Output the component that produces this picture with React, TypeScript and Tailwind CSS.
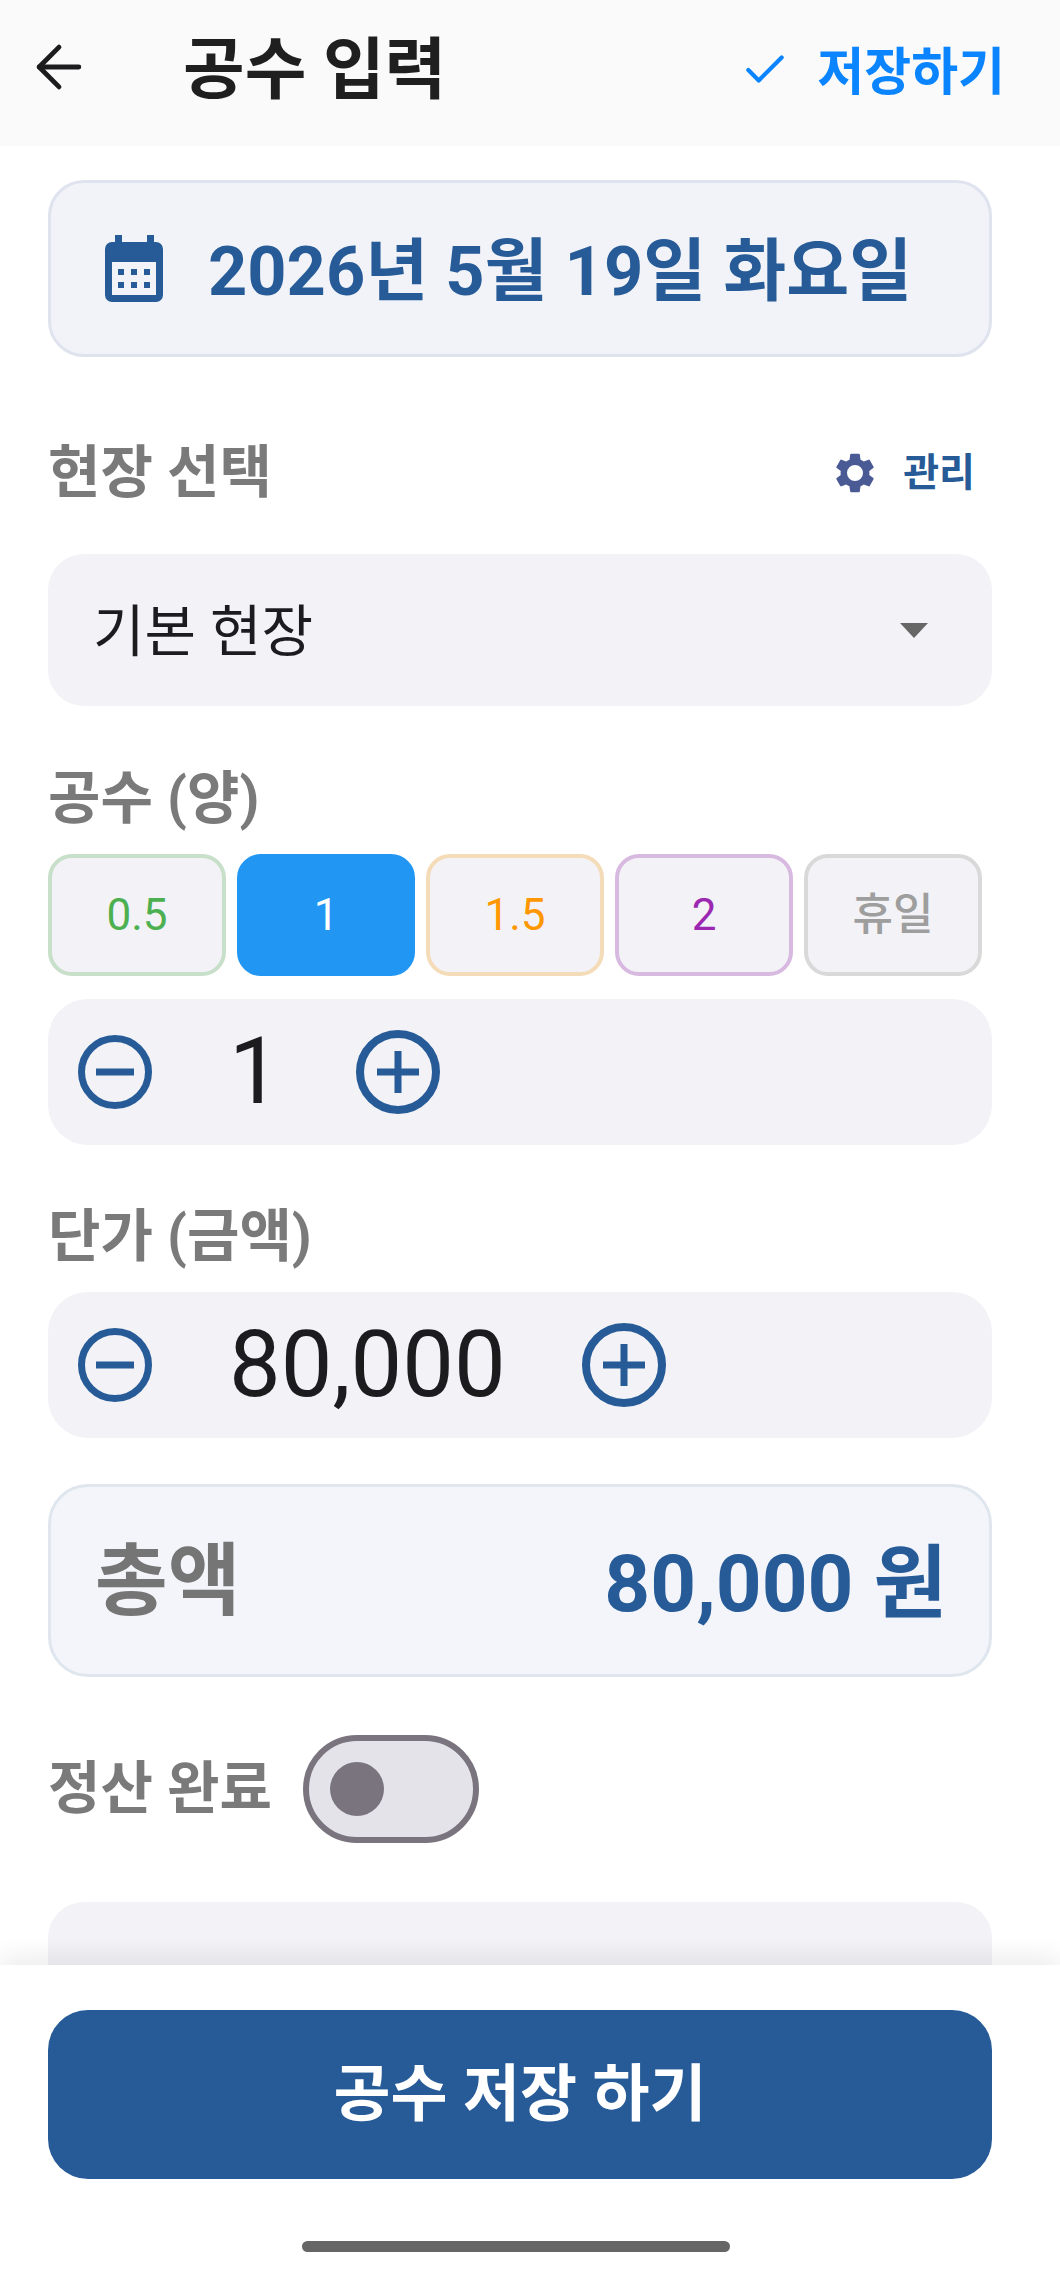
import { ArrowLeft, Check } from 'lucide-react'

const font = { fontFamily: 'Roboto, "Noto Sans CJK KR", sans-serif' }

function CalendarIcon() {
  return (
    <svg viewBox="0 0 58 67" className="h-[67px] w-[58px]" fill="#265b97">
      <rect x="10" y="0" width="7" height="9" />
      <rect x="42" y="0" width="7" height="9" />
      <path d="M7 7h44a7 7 0 0 1 7 7v46a7 7 0 0 1-7 7H7a7 7 0 0 1-7-7V14a7 7 0 0 1 7-7zM7 27v33h44V27z" fillRule="evenodd" />
      {[13, 26, 39].map((x) =>
        [34, 47].map((y) => <rect key={`${x}-${y}`} x={x} y={y} width="6" height="6" />),
      )}
    </svg>
  )
}

function GearIcon() {
  return (
    <svg viewBox="0 0 24 24" className="h-[48px] w-[48px]" fill="#4a5a94">
      <path
        fillRule="evenodd"
        d="M19.14 12.94c.04-.3.06-.61.06-.94 0-.32-.02-.64-.07-.94l2.03-1.58a.49.49 0 0 0 .12-.61l-1.92-3.32a.488.488 0 0 0-.59-.22l-2.39.96c-.5-.38-1.03-.7-1.62-.94l-.36-2.54a.484.484 0 0 0-.48-.41h-3.84c-.24 0-.43.17-.47.41l-.36 2.54c-.59.24-1.13.57-1.62.94l-2.39-.96c-.22-.08-.47 0-.59.22L2.74 8.87c-.12.21-.08.47.12.61l2.03 1.58c-.05.3-.09.63-.09.94s.02.64.07.94l-2.03 1.58a.49.49 0 0 0-.12.61l1.92 3.32c.12.22.37.29.59.22l2.39-.96c.5.38 1.03.7 1.62.94l.36 2.54c.05.24.24.41.48.41h3.84c.24 0 .44-.17.47-.41l.36-2.54c.59-.24 1.13-.56 1.62-.94l2.39.96c.22.08.47 0 .59-.22l1.92-3.32c.12-.22.07-.47-.12-.61l-2.01-1.58zM12 16a4 4 0 1 1 0-8 4 4 0 0 1 0 8z"
      />
    </svg>
  )
}

function MinusCircle() {
  return (
    <svg viewBox="0 0 74 74" className="h-[74px] w-[74px]" fill="none" stroke="#265b97" strokeWidth="7">
      <circle cx="37" cy="37" r="33.5" />
      <path d="M18 37h38" />
    </svg>
  )
}

function PlusCircle() {
  return (
    <svg viewBox="0 0 84 84" className="h-[84px] w-[84px]" fill="none" stroke="#265b97" strokeWidth="8">
      <circle cx="42" cy="42" r="38" />
      <path d="M21 42h42M42 21v42" strokeWidth="7" />
    </svg>
  )
}

function Label({ children }: { children: string }) {
  return <div className="text-[57px] font-bold leading-[66px] text-[#7a7a7a]">{children}</div>
}

function Stepper({ value, gap }: { value: string; gap: string }) {
  return (
    <div className="flex h-[146px] items-center rounded-[40px] bg-[#f2f2f7] pl-[30px]">
      <MinusCircle />
      <div className={`ml-[77px] text-[92px] font-[430] leading-none text-[#1c1c1e] ${gap}`}>{value}</div>
      <PlusCircle />
    </div>
  )
}

export default function App() {
  const chips = [
    { label: '0.5', box: 'border-[#c8dfc9] bg-[#f2f2f7] text-[#4caf50]' },
    { label: '1', box: 'border-[#2196f3] bg-[#2196f3] text-white' },
    { label: '1.5', box: 'border-[#f5dcb8] bg-[#f2f2f7] text-[#ff9800]' },
    { label: '2', box: 'border-[#d8b9e0] bg-[#f2f2f7] text-[#9c27b0]' },
    { label: '휴일', box: 'border-[#d9d9d9] bg-[#f2f2f7] font-medium text-[#9e9e9e]' },
  ]

  return (
    <div style={font} className="flex h-[2269px] flex-col overflow-hidden bg-white">
      <header className="flex h-[146px] shrink-0 items-start bg-[#fafafa]">
        <ArrowLeft className="ml-[25px] mt-[33px] h-[68px] w-[68px] text-[#1c1c1e]" strokeWidth={1.7} />
        <h1 className="ml-[90px] mt-[30px] text-[67px] font-bold leading-[80px] text-[#1f1f1f]">공수 입력</h1>
        <div className="ml-auto mr-[55px] mt-[41px] flex items-center">
          <Check className="mb-[6px] mr-[27px] h-[50px] w-[50px] text-[#0a84ff]" strokeWidth={2} />
          <span className="text-[51px] font-bold leading-[64px] text-[#0a84ff]">저장하기</span>
        </div>
      </header>

      <main className="flex-1 overflow-hidden pl-[48px] pr-[68px] pt-[34px]">
        <div className="flex h-[177px] items-center rounded-[36px] border-[3px] border-[#dfe3ee] bg-[#f2f3f8] pl-[54px]">
          <CalendarIcon />
          <span className="ml-[45px] pt-[8px] text-[68.5px] font-bold leading-none text-[#265b97]">2026년 5월 19일 화요일</span>
        </div>

        <div className="mt-[81px] flex h-[70px] items-center justify-between pr-[17px]">
          <Label>현장 선택</Label>
          <div className="flex items-center">
            <GearIcon />
            <span className="ml-[24px] text-[39px] font-bold leading-none text-[#265b97]">관리</span>
          </div>
        </div>

        <div className="mt-[46px] flex h-[152px] items-center justify-between rounded-[36px] bg-[#f2f2f7] pl-[45px] pr-[64px]">
          <span className="pt-[3px] text-[56px] leading-none text-[#1c1c1e]">기본 현장</span>
          <div className="h-0 w-0 border-x-[14px] border-t-[15px] border-x-transparent border-t-[#666666]" />
        </div>

        <div className="mt-[60px]">
          <Label>공수 (양)</Label>
        </div>

        <div className="mt-[22px] flex gap-[11px]">
          {chips.map((chip) => (
            <div
              key={chip.label}
              className={`flex h-[122px] w-[178px] items-center justify-center rounded-[24px] border-[4px] text-[44px] leading-none ${chip.box}`}
            >
              {chip.label}
            </div>
          ))}
        </div>

        <div className="mt-[23px]">
          <Stepper value="1" gap="mr-[75px]" />
        </div>

        <div className="mt-[59px]">
          <Label>단가 (금액)</Label>
        </div>

        <div className="mt-[22px]">
          <Stepper value="80,000" gap="mr-[76px]" />
        </div>

        <div className="mt-[46px] flex h-[193px] items-center justify-between rounded-[40px] border-[3px] border-[#e0e6ee] bg-[#f3f5fa] pl-[44px] pr-[42px]">
          <span className="pt-[3px] text-[79px] font-bold leading-none text-[#757575]">총액</span>
          <span className="pt-[6px] text-[80px] font-bold leading-none text-[#265b97]">80,000 원</span>
        </div>

        <div className="mt-[58px] flex items-center">
          <Label>정산 완료</Label>
          <div className="ml-[31px] flex h-[108px] w-[176px] items-center rounded-full border-[6px] border-[#79747e] bg-[#e4e3ea] pl-[21px]">
            <div className="h-[54px] w-[54px] rounded-full bg-[#79747e]" />
          </div>
        </div>

        <div className="mt-[59px] h-[160px] rounded-[36px] bg-[#f2f2f7] pl-[46px] pt-[62px] text-[50px] leading-[60px] text-[#9a9a9f]">
          메모를 입력하세요
        </div>
      </main>

      <footer className="relative h-[304px] shrink-0 bg-white pl-[48px] pr-[68px] pt-[45px] shadow-[0_-8px_24px_rgba(0,0,0,0.08)]">
        <div className="flex h-[169px] items-center justify-center rounded-[40px] bg-[#265b97] text-[62px] font-bold leading-none text-white">
          공수 저장 하기
        </div>
        <div className="ml-[254px] mt-[62px] h-[11px] w-[428px] rounded-full bg-[#666666]" />
      </footer>
    </div>
  )
}
